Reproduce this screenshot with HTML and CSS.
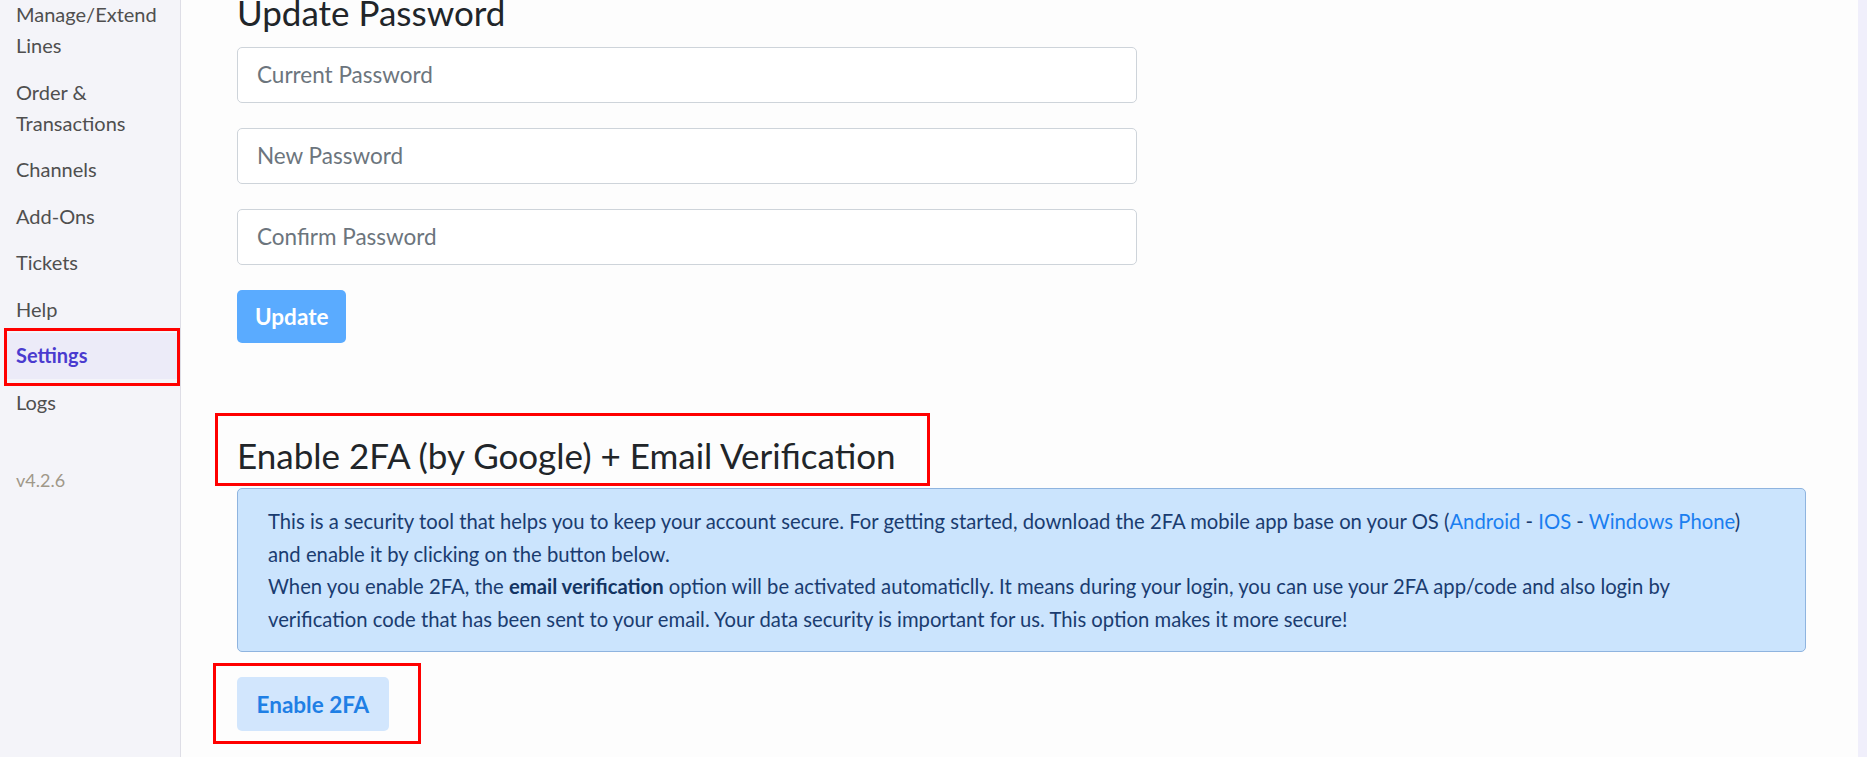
FILE: index.html
```html
<!DOCTYPE html>
<html lang="en">
<head>
  <meta charset="UTF-8" />
  <meta name="viewport" content="width=device-width, initial-scale=1.0"/>
  <title>Settings</title>
  <link rel="stylesheet" href="styles.css">
</head>
<body>

  <div class="layout">
    <aside class="sidebar">
      <ul class="menu">
        <li><a href="#">Manage/Extend Lines</a></li>
        <li><a href="#">Order &amp; Transactions</a></li>
        <li><a href="#">Channels</a></li>
        <li><a href="#">Add-Ons</a></li>
        <li><a href="#">Tickets</a></li>
        <li><a href="#">Help</a></li>
        <li class="active marked"><a href="#">Settings</a></li>
        <li><a href="#">Logs</a></li>
      </ul>
      <div class="version">v4.2.6</div>
    </aside>

    <main class="content">
      <h2 class="first-title">Update Password</h2>
      <form class="password-form" onsubmit="return false">
        <input type="password" placeholder="Current Password" />
        <input type="password" placeholder="New Password" />
        <input type="password" placeholder="Confirm Password" />
        <button class="btn btn-primary">Update</button>
      </form>

      <h2 class="section-title marked">Enable 2FA (by Google) + Email Verification</h2>
      <div class="alert">
        This is a security tool that helps you to keep your account secure. For getting started, download the 2FA mobile app base on your OS (<a href="#">Android</a> - <a href="#">IOS</a> - <a href="#">Windows Phone</a>) and enable it by clicking on the button below.<br>
        When you enable 2FA, the <b>email verification</b> option will be activated automaticlly. It means during your login, you can use your 2FA app/code and also login by verification code that has been sent to your email. Your data security is important for us. This option makes it more secure!
      </div>
      <button class="btn btn-light marked">Enable 2FA</button>
    </main>

    <div class="side-strip"></div>
  </div>

</body>
</html>
```

FILE: styles.css
```css
body {
  margin: 0;
  font-family: Lato, "Open Sans", sans-serif;
  background: #fdfdfd;
  color: #212529;
  overflow: hidden;
}
.layout {
  display: flex;
  min-height: 100vh;
}

/* sidebar */
.sidebar {
  width: 180px;
  flex-shrink: 0;
  background: #f4f4f9;
  border-right: 1px solid #dedee6;
}
.menu {
  list-style: none;
  margin: -8.3px 3px 0 7px;
  padding: 0;
}
.menu li {
  position: relative;
  padding: 7.75px 9px;
  font-size: 20px;
  line-height: 31px;
}
.menu a {
  color: #4f4f4f;
  text-decoration: none;
}
.menu li.active {
  background: #ecebf8;
}
.menu li.active a {
  color: #4a3bcf;
  font-weight: bold;
}
.version {
  margin: 32px 0 0 16px;
  padding: 7.75px 0;
  font-size: 18px;
  line-height: 31px;
  color: #a09889;
}

/* red annotation frames */
.marked::after {
  content: "";
  position: absolute;
  border: 3px solid #ff0000;
  pointer-events: none;
}
.menu li.marked::after {
  top: -5px;
  bottom: -7px;
  left: -3px;
  right: -3px;
}
.section-title.marked::after {
  top: -21px;
  bottom: -10px;
  left: -22px;
  right: -34px;
}
.btn.marked::after {
  top: -14px;
  bottom: -13px;
  left: -24px;
  right: -32px;
}

/* main */
.content {
  flex: 1;
  padding: 0 52px 0 56px;
}
h2 {
  font-size: 35px;
  font-weight: normal;
  line-height: 1.2;
  margin: 0;
}
.first-title {
  margin-top: -9.5px;
  margin-bottom: 14px;
}
.password-form {
  display: flex;
  flex-direction: column;
  align-items: flex-start;
  gap: 25px;
}
.password-form input {
  box-sizing: border-box;
  width: 900px;
  height: 56px;
  padding: 0 19px;
  border: 1px solid #ced4da;
  border-radius: 5px;
  background: #fff;
  font-family: inherit;
  font-size: 22.5px;
}
.password-form input::placeholder {
  color: #6c757d;
}
.btn {
  position: relative;
  display: block;
  border: none;
  border-radius: 5px;
  font-family: inherit;
  font-size: 22.5px;
  font-weight: bold;
  cursor: pointer;
}
.btn-primary {
  height: 53px;
  padding: 0 18px;
  background: #5aabff;
  color: #fff;
}
.section-title {
  position: relative;
  width: fit-content;
  margin-top: 91.5px;
}
.alert {
  margin-top: 12.2px;
  padding: 16px 50px 16px 30px;
  border: 1px solid #8fb4df;
  border-radius: 5px;
  background: #cbe4fd;
  color: #1a3c70;
  font-size: 20.25px;
  line-height: 32.5px;
}
.alert a {
  color: #1a7ef0;
  text-decoration: none;
}
.alert b {
  color: #123463;
}
.btn-light {
  margin-top: 25px;
  height: 54px;
  padding: 0 19.5px;
  background: #d2e6fd;
  color: #1f7fe5;
}
.side-strip {
  width: 9px;
  flex-shrink: 0;
  background: #f0effb;
}
```
